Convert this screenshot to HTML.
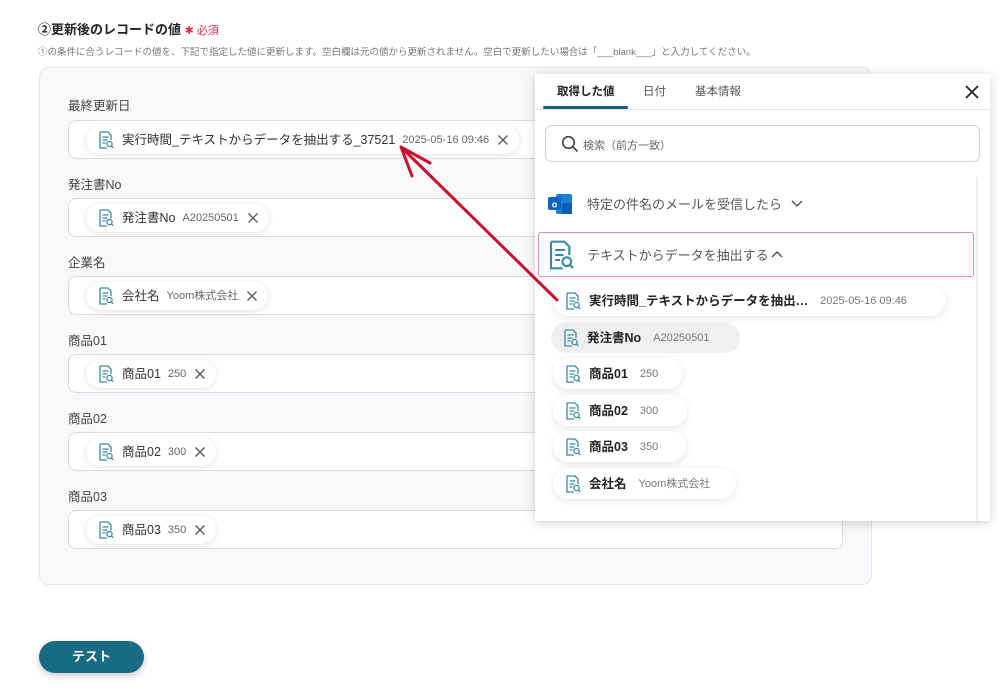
<!DOCTYPE html>
<html><head><meta charset="utf-8"><style>
*{box-sizing:border-box;margin:0;padding:0}
body{width:1000px;height:694px;background:#fff;font-family:"Liberation Sans","Noto Sans CJK JP",sans-serif;position:relative;overflow:hidden;color:#333}
.abs{position:absolute}
.title{left:38px;top:19px;font-size:13px;font-weight:bold;color:#222}
.title .req{color:#e0304f;font-weight:normal;font-size:11px}
.sub{left:38px;top:44px;font-size:9.5px;color:#777;white-space:nowrap}
.card{left:39px;top:67px;width:833px;height:518px;background:#f7f8f9;border:1px solid #e2e5e9;border-radius:10px}
.lbl{font-size:12.5px;color:#444;left:68px}
.inp{left:68px;width:775px;height:39px;background:#fff;border:1px solid #d7dce1;border-radius:8px}
.chip{position:absolute;left:17px;top:5px;height:28px;background:#fff;border-radius:14px;box-shadow:0 1px 6px rgba(0,0,0,.12);display:flex;align-items:center;padding:0 10px 0 12px;font-size:12.5px;color:#333;white-space:nowrap}
.chip span,.it span,.chip b,.it b{display:block;line-height:14px;height:14px}
.chip .t,.it .t{line-height:16px;height:16px}
.chip .v{font-size:11px;color:#666;margin-left:7px}
.xs{margin-left:8px;flex:none}
.ic{width:16px;height:18px;flex:none;margin-right:8px}
.panel{left:535px;top:74px;width:455px;height:447px;background:#fff;box-shadow:0 2px 10px rgba(0,0,0,.18)}
.tab{position:absolute;top:9px;font-size:11.5px;color:#555}
.it{position:absolute;left:18px;height:31px;border-radius:16px;background:#fff;box-shadow:0 2px 8px rgba(0,0,0,.1);display:flex;align-items:center;padding:0 12px 0 12px;font-size:12.5px;font-weight:bold;color:#222;white-space:nowrap}
.it .v{font-weight:normal;color:#777;font-size:11px;margin-left:12px}
.btn{left:39px;top:641px;width:105px;height:32px;background:#176b83;border-radius:16px;color:#fff;font-weight:bold;font-size:13px;text-align:center;line-height:32px;box-shadow:0 3px 8px rgba(0,0,0,.2)}
</style></head><body>
<svg width="0" height="0" style="position:absolute"><defs>
<symbol id="doc" viewBox="0 0 16 18"><path d="M2 1h8l3 3v5M2 1v16h7" fill="none" stroke="#3a8aa3" stroke-width="1.3"/><path d="M4.5 6h6M4.5 9h5M4.5 12h3" stroke="#3a8aa3" stroke-width="1.2"/><circle cx="11.5" cy="13" r="2.6" fill="none" stroke="#3a8aa3" stroke-width="1.3"/><path d="M13.4 15l1.8 1.8" stroke="#3a8aa3" stroke-width="1.3"/></symbol>
<symbol id="x" viewBox="0 0 12 12"><path d="M1.5 1.5l9 9M10.5 1.5l-9 9" stroke="#555" stroke-width="1.3"/></symbol>
</defs></svg>
<div class="abs title">②更新後のレコードの値 <span class="req">✱ 必須</span></div>
<div class="abs sub">①の条件に合うレコードの値を、下記で指定した値に更新します。空白欄は元の値から更新されません。空白で更新したい場合は「___blank___」と入力してください。</div>
<div class="abs card"></div>

<div class="abs lbl" style="top:95px">最終更新日</div>
<div class="abs inp" style="top:120px"><div class="chip"><svg class="ic"><use href="#doc"/></svg><span class="t">実行時間_テキストからデータを抽出する_37521</span><span class="v">2025-05-16 09:46</span><svg class="xs" width="12" height="12"><use href="#x"/></svg></div></div>
<div class="abs lbl" style="top:174px">発注書No</div>
<div class="abs inp" style="top:198px"><div class="chip"><svg class="ic"><use href="#doc"/></svg><span class="t">発注書No</span><span class="v">A20250501</span><svg class="xs" width="12" height="12"><use href="#x"/></svg></div></div>
<div class="abs lbl" style="top:252px">企業名</div>
<div class="abs inp" style="top:276px"><div class="chip"><svg class="ic"><use href="#doc"/></svg><span class="t">会社名</span><span class="v">Yoom株式会社</span><svg class="xs" width="12" height="12"><use href="#x"/></svg></div></div>
<div class="abs lbl" style="top:330px">商品01</div>
<div class="abs inp" style="top:354px"><div class="chip"><svg class="ic"><use href="#doc"/></svg><span class="t">商品01</span><span class="v">250</span><svg class="xs" width="12" height="12"><use href="#x"/></svg></div></div>
<div class="abs lbl" style="top:408px">商品02</div>
<div class="abs inp" style="top:432px"><div class="chip"><svg class="ic"><use href="#doc"/></svg><span class="t">商品02</span><span class="v">300</span><svg class="xs" width="12" height="12"><use href="#x"/></svg></div></div>
<div class="abs lbl" style="top:486px">商品03</div>
<div class="abs inp" style="top:510px"><div class="chip"><svg class="ic"><use href="#doc"/></svg><span class="t">商品03</span><span class="v">350</span><svg class="xs" width="12" height="12"><use href="#x"/></svg></div></div>

<div class="abs panel">
  <div class="tab" style="left:22px;color:#222;font-weight:bold">取得した値</div>
  <div class="tab" style="left:108px">日付</div>
  <div class="tab" style="left:160px">基本情報</div>
  <div class="abs" style="left:8px;top:32px;width:85px;height:3px;background:#1b5f78;border-radius:2px"></div>
  <div class="abs" style="left:0;top:35px;width:455px;height:1px;background:#e3e6ea"></div>
  <svg class="abs" style="left:429px;top:10px" width="16" height="16"><path d="M2 2l12 12M14 2L2 14" stroke="#222" stroke-width="1.8"/></svg>
  <div class="abs" style="left:10px;top:51px;width:435px;height:37px;border:1px solid #ccd1d6;border-radius:7px"></div>
  <svg class="abs" style="left:26px;top:61px" width="18" height="18"><circle cx="7.5" cy="7.5" r="5.8" fill="none" stroke="#444" stroke-width="1.6"/><path d="M12 12l4.5 4.5" stroke="#444" stroke-width="1.6"/></svg>
  <div class="abs" style="left:48px;top:63px;font-size:11px;color:#666">検索（前方一致）</div>
  <div class="abs" style="left:441px;top:103px;width:2px;height:344px;background:#eceef0"></div>
  <svg class="abs" style="left:13px;top:119px" width="25" height="22"><rect x="8" y="1" width="16" height="20" rx="2" fill="#1a7dd6"/><rect x="14" y="10" width="10" height="11" fill="#0f5fb0"/><rect x="0" y="4" width="13" height="13" rx="2" fill="#0a64c4"/><text x="6.5" y="14.5" font-size="9" font-weight="bold" fill="#fff" text-anchor="middle" font-family="Liberation Sans">o</text></svg>
  <div class="abs" style="left:52px;top:120px;font-size:13px;color:#555">特定の件名のメールを受信したら</div>
  <svg class="abs" style="left:256px;top:125px" width="12" height="10"><path d="M1 2l5 5 5-5" fill="none" stroke="#555" stroke-width="1.5"/></svg>
  <div class="abs" style="left:3px;top:158px;width:436px;height:45px;border:1.5px solid #ea86b2;border-radius:3px"></div>
  <svg class="abs" style="left:12px;top:166px" width="28" height="30" viewBox="0 0 16 18"><use href="#doc"/></svg>
  <div class="abs" style="left:52px;top:171px;font-size:13px;color:#555">テキストからデータを抽出する</div>
  <svg class="abs" style="left:236px;top:175px" width="12" height="10"><path d="M1 8l5-5 5 5" fill="none" stroke="#555" stroke-width="1.5"/></svg>
  <div class="it" style="top:211px;width:393px"><svg class="ic"><use href="#doc"/></svg><span class="t">実行時間_テキストからデータを抽出…</span><span class="v">2025-05-16 09:46</span></div>
  <div class="it" style="top:248px;width:189px;background:#efefef;box-shadow:none;left:16px"><svg class="ic"><use href="#doc"/></svg><span class="t">発注書No</span><span class="v">A20250501</span></div>
  <div class="it" style="top:284px;width:130px"><svg class="ic"><use href="#doc"/></svg><span class="t">商品01</span><span class="v">250</span></div>
  <div class="it" style="top:321px;width:134px"><svg class="ic"><use href="#doc"/></svg><span class="t">商品02</span><span class="v">300</span></div>
  <div class="it" style="top:357px;width:133px"><svg class="ic"><use href="#doc"/></svg><span class="t">商品03</span><span class="v">350</span></div>
  <div class="it" style="top:394px;width:183px"><svg class="ic"><use href="#doc"/></svg><span class="t">会社名</span><span class="v">Yoom株式会社</span></div>
</div>

<svg class="abs" style="left:0;top:0" width="1000" height="694"><path d="M557 300L401 147M401 147L430 163M401 147L412 176" fill="none" stroke="#c8102e" stroke-width="3" stroke-linecap="round"/></svg>

<div class="abs btn">テスト</div>
</body></html>
